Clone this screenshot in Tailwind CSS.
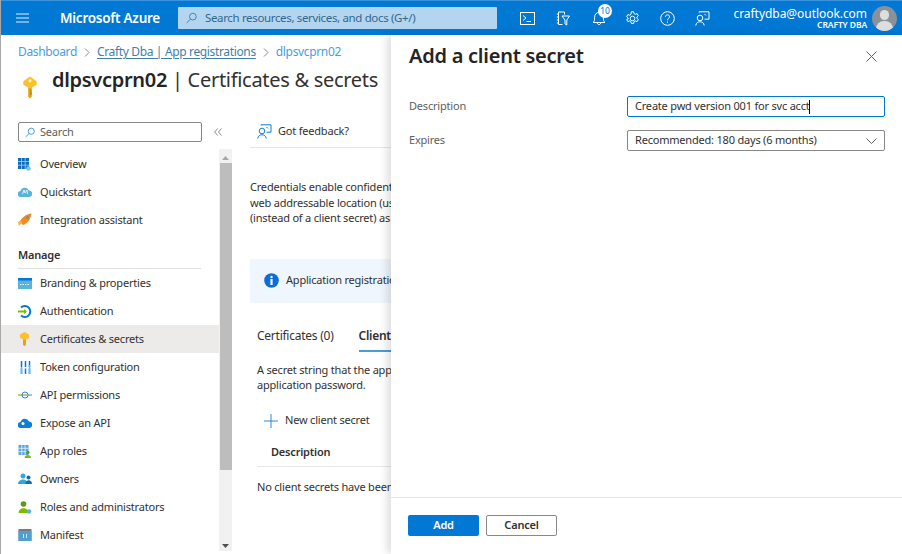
<!DOCTYPE html>
<html>
<head>
<meta charset="utf-8">
<script src="https://cdn.jsdelivr.net/npm/@tailwindcss/browser@4"></script>
</head>
<body class="m-0">
<div class="relative flex flex-col w-[902px] h-[554px] overflow-hidden bg-white text-[#323130] font-['Noto_Sans',sans-serif] text-[11px] tracking-[-0.2px] border-l border-[#a8a8a8]">
  <!-- top bar -->
  <header class="flex items-center h-[35px] shrink-0 bg-[#0078d4] border-t border-[#3a94dc] text-white -ml-px">
    <svg class="ml-[16px] w-[13px] h-[10px]" viewBox="0 0 13 10" fill="none" stroke="#e6f1fb" stroke-width="1"><path d="M0 1h13M0 5h13M0 9h13"/></svg>
    <span class="ml-[31px] w-[118px] text-[13.5px] font-semibold tracking-[-0.25px] whitespace-nowrap">Microsoft Azure</span>
    <div class="flex items-center w-[319px] h-[22px] rounded-[1px] bg-[#b3d5f0] text-[#30688f] text-[11.5px] tracking-[-0.35px]">
      <svg class="ml-[8px] mr-[8px] w-[11px] h-[12px]" viewBox="0 0 12 12" fill="none" stroke="#3f7fae" stroke-width="1"><circle cx="7.5" cy="4.5" r="3.7"/><path d="M5 7.2L.7 11.4"/></svg>
      Search resources, services, and docs (G+/)
    </div>
    <div class="flex items-center ml-[23px]">
      <svg class="w-[15px] h-[13px]" viewBox="0 0 15 13" fill="none" stroke="#fff" stroke-width="1"><rect x=".5" y=".5" width="14" height="12"/><path d="M3 3.500L6 6 3 8.500M6.500 9.500H11"/></svg>
      <svg class="ml-[21px] w-[14px] h-[15px]" viewBox="0 0 14 15" fill="none" stroke="#fff" stroke-width="1"><path d="M2.500 1h6v2.500M2.500 1v12.500h4M2.500 3H.8M2.500 6H.8M2.500 9H.8M2.500 12H.8M6 5h7.500L10.800 9v5l-1.800-1V9z"/></svg>
      <div class="relative ml-[22px] w-[14px] h-[16px]">
        <svg class="w-[14px] h-[16px]" viewBox="0 0 14 16" fill="none" stroke="#fff" stroke-width="1"><path d="M1 12.500c1.500-1 1.600-2.500 1.600-5C2.600 4 4.500 2.500 7 2.500s4.400 1.500 4.400 5c0 2.500.1 4 1.600 5zM5.300 12.800c0 2.400 3.400 2.400 3.400 0"/></svg>
        <span class="absolute -top-[6px] left-[6px] flex items-center justify-center w-[14px] h-[14px] rounded-full bg-white text-[#0078d4] text-[8.5px] leading-none">10</span>
      </div>
      <svg class="ml-[19px] w-[15px] h-[15px]" viewBox="0 0 15 15" fill="none" stroke="#fff" stroke-width="1"><circle cx="7.500" cy="7.500" r="2.300"/><path d="M6.300.8h2.400l.4 1.900 1.200.6 1.800-.7 1.200 2.100-1.400 1.300v1.200l1.400 1.300-1.200 2.100-1.800-.7-1.200.6-.4 1.900H6.300l-.4-1.900-1.200-.6-1.800.7-1.200-2.100L3.100 8.100V6.900L1.700 5.600l1.200-2.100 1.800.7 1.200-.6z"/></svg>
      <svg class="ml-[20px] w-[15px] h-[15px]" viewBox="0 0 15 15" fill="none" stroke="#fff" stroke-width="1"><circle cx="7.500" cy="7.500" r="6.800"/><path d="M5.500 5.800c0-2.700 4-2.700 4 0 0 1.700-2 1.600-2 3.500M7.500 10.500v1.200"/></svg>
      <svg class="ml-[20px] w-[15px] h-[15px]" viewBox="0 0 15 15" fill="none" stroke="#fff" stroke-width="1"><circle cx="5" cy="7" r="2.800"/><path d="M.8 14.500c.3-5 8-5 8.400 0M4 1.500V.8h10v7.400H9.500M9.500 3l1.500 1.500"/></svg>
    </div>
    <div class="ml-auto mr-[5px] flex flex-col items-end leading-none">
      <span class="mt-[1px] text-[12px] tracking-[-0.05px] whitespace-nowrap">craftydba@outlook.com</span>
      <span class="mt-[1px] text-[8.5px] font-semibold tracking-[-0.1px] whitespace-nowrap">CRAFTY DBA</span>
    </div>
    <div class="relative mr-[5px] w-[25px] h-[25px] rounded-full bg-[#8a9199] overflow-hidden">
      <span class="absolute left-[8px] top-[4px] w-[9px] h-[10px] rounded-full bg-[#dcdee0]"></span>
      <span class="absolute left-[4px] top-[15px] w-[17px] h-[12px] rounded-t-[8px] bg-[#dcdee0]"></span>
    </div>
  </header>

  <div class="flex flex-col grow min-h-0">
    <!-- breadcrumb -->
    <nav class="flex items-center gap-[7px] mt-[9px] ml-[17px] h-[16px] text-[12px] tracking-[-0.35px] whitespace-nowrap">
      <span class="text-[#4a9ddb]">Dashboard</span>
      <svg class="w-[6px] h-[9px]" viewBox="0 0 6 9" fill="none" stroke="#8a8886"><path d="M1 .5l4 4-4 4"/></svg>
      <span class="text-[#3f7fa8] underline underline-offset-2">Crafty Dba | App registrations</span>
      <svg class="w-[6px] h-[9px]" viewBox="0 0 6 9" fill="none" stroke="#8a8886"><path d="M1 .5l4 4-4 4"/></svg>
      <span class="text-[#4a9ddb]">dlpsvcprn02</span>
    </nav>
    <!-- title -->
    <div class="flex items-start ml-[21px] mt-[4px] h-[42px]">
      <svg class="mt-[11px] w-[16px] h-[25px]" viewBox="0 0 18 26"><path d="M7 10h4v13l-2 2.500L7 23z" fill="#e8a20c"/><path d="M9 14v8l2-1v-2l-1-1 1-1z" fill="#c98a05"/><path d="M9 .5l7.500 5.500v4L9 14 1.500 10V6z" fill="#fbc02d"/><circle cx="9" cy="5.500" r="1.800" fill="#fff3c4"/></svg>
      <h1 class="ml-[14px] text-[20px] leading-[32px] tracking-[-0.3px] whitespace-nowrap"><span class="font-semibold text-[#252423]">dlpsvcprn02</span> | Certificates &amp; secrets</h1>
    </div>

    <div class="flex grow min-h-0 mt-[16px]">
      <!-- sidebar -->
      <aside class="relative w-[231px] shrink-0 flex flex-col">
        <div class="flex items-center">
          <div class="flex items-center ml-[17px] w-[184px] h-[20px] border border-[#8a8886] rounded-[2px] text-[#605e5c] text-[11px]">
            <svg class="ml-[6px] mr-[5px] w-[10px] h-[11px]" viewBox="0 0 12 12" fill="none" stroke="#2b88d8" stroke-width="1"><circle cx="7.500" cy="4.500" r="3.700"/><path d="M5 7.200L.7 11.400"/></svg>
            Search
          </div>
          <svg class="ml-[12px] w-[8px] h-[8px]" viewBox="0 0 8 8" fill="none" stroke="#8a8886"><path d="M3.700.5L.7 4l3 3.500M7.500.5L4.500 4l3 3.500"/></svg>
        </div>
        <div class="flex grow min-h-0 mt-[8px]">
          <ul class="w-[218px] shrink-0 leading-[28px] whitespace-nowrap">
            <li class="flex items-center h-[28px] pl-[17px]"><svg class="w-[13px] h-[13px] mr-[9px]" viewBox="0 0 13 13"><rect width="11" height="11" fill="#0f6cbd"/><path d="M0 3.500h11M0 7.200h11M3.500 0v11M7.200 0v11" stroke="#9fd0f2" stroke-width=".8"/><circle cx="10.500" cy="10.500" r="2.300" fill="#7cc4ee"/></svg>Overview</li>
            <li class="flex items-center h-[28px] pl-[17px]"><svg class="w-[14px] h-[10px] mr-[8px]" viewBox="0 0 14 10"><path d="M3 10a3 3 0 0 1-.5-6A4.500 4.500 0 0 1 11 3.500 3.200 3.200 0 0 1 11 10z" fill="#59b4d9"/><path d="M4.500 7l1.500-4 1 3 2-3 .5 4" stroke="#fff" stroke-width=".8" fill="none"/></svg>Quickstart</li>
            <li class="flex items-center h-[28px] pl-[17px]"><svg class="w-[14px] h-[14px] mr-[8px]" viewBox="0 0 14 14"><path d="M2 9C3 5 8 1 13.500.5 13 6 9 11 5 12z" fill="#f28a1e"/><path d="M0 9l3-2 1 3-3 3z" fill="#fbb040"/><circle cx="9.500" cy="4.500" r="1.300" fill="#3aa0e0"/></svg>Integration assistant</li>
            <li class="mt-[7px] ml-[17px] mr-[18px] h-[28px] font-semibold border-b border-[#dfdfdf] leading-[27px]">Manage</li>
            <li class="flex items-center h-[28px] pl-[17px]"><svg class="w-[14px] h-[11px] mr-[8px]" viewBox="0 0 14 11"><rect width="14" height="11" fill="#59b4d9"/><rect width="14" height="2.500" fill="#0078d4"/><path d="M2 6.500h10" stroke="#fff" stroke-dasharray="1.500 1"/></svg>Branding &amp; properties</li>
            <li class="flex items-center h-[28px] pl-[17px]"><svg class="w-[14px] h-[13px] mr-[8px]" viewBox="0 0 14 13" fill="none"><path d="M3 2.500a5.500 5.500 0 1 1 0 8" stroke="#0078d4" stroke-width="2"/><path d="M0 6.500h8" stroke="#7fba00" stroke-width="2"/><path d="M6 4l3 2.500L6 9z" fill="#7fba00"/></svg>Authentication</li>
            <li class="flex items-center h-[28px] pl-[19px] bg-[#edebe9]"><svg class="w-[9px] h-[14px] mr-[11px]" viewBox="0 0 9 14"><path d="M3 6h3v7l-1.500 1L3 13z" fill="#e8a20c"/><path d="M4.500 0L9 2.500V6L4.500 8 0 6V2.500z" fill="#fbc02d"/></svg>Certificates &amp; secrets</li>
            <li class="flex items-center h-[28px] pl-[19px]"><svg class="w-[11px] h-[13px] mr-[9px]" viewBox="0 0 10 13"><path d="M1 0v13M5 0v13M9 0v13" stroke="#0078d4" stroke-width="1.500" stroke-dasharray="6 1.500"/><path d="M1 6v7M9 4v9" stroke="#50c4f0" stroke-width="1.500"/></svg>Token configuration</li>
            <li class="flex items-center h-[28px] pl-[17px]"><svg class="w-[14px] h-[8px] mr-[8px]" viewBox="0 0 14 8" fill="none"><path d="M0 4h9" stroke="#7fba00" stroke-width="1.200"/><circle cx="7" cy="4" r="3" stroke="#2b88d8"/><path d="M10 4h4" stroke="#2b88d8"/></svg>API permissions</li>
            <li class="flex items-center h-[28px] pl-[17px]"><svg class="w-[14px] h-[10px] mr-[8px]" viewBox="0 0 14 10"><path d="M3 10a3 3 0 0 1-.5-6A4.500 4.500 0 0 1 11 3.500 3.200 3.200 0 0 1 11 10z" fill="#0f7fd6"/><circle cx="5" cy="5.500" r="1.500" fill="#fff"/></svg>Expose an API</li>
            <li class="flex items-center h-[28px] pl-[17px]"><svg class="w-[14px] h-[13px] mr-[8px]" viewBox="0 0 13 13"><rect width="10" height="10" fill="#59a5dc"/><path d="M0 3.300h10M0 6.600h10M3.300 0v10M6.600 0v10" stroke="#fff" stroke-width=".7"/><path d="M6 13c0-4 6.500-4 6.500 0z" fill="#7fba00"/><circle cx="9.300" cy="7.500" r="1.800" fill="#5e9a10"/></svg>App roles</li>
            <li class="flex items-center h-[28px] pl-[17px]"><svg class="w-[14px] h-[12px] mr-[8px]" viewBox="0 0 14 12"><circle cx="5" cy="3" r="2.500" fill="#2fa8e0"/><path d="M0 11c0-6 10-6 10 0z" fill="#2fa8e0"/><circle cx="10.500" cy="4.500" r="2" fill="#0f6cbd"/><path d="M7.500 11c0-5 6.500-5 6.500 0z" fill="#0f6cbd"/></svg>Owners</li>
            <li class="flex items-center h-[28px] pl-[17px]"><svg class="w-[14px] h-[13px] mr-[8px]" viewBox="0 0 13 13"><circle cx="5" cy="3" r="2.800" fill="#5e9a10"/><path d="M0 12c0-6.500 10-6.500 10 0z" fill="#7fba00"/><circle cx="10.500" cy="10.500" r="2.300" fill="#59b4d9"/></svg>Roles and administrators</li>
            <li class="flex items-center h-[28px] pl-[17px]"><svg class="w-[14px] h-[12px] mr-[8px]" viewBox="0 0 13 12"><rect width="13" height="12" fill="#7a7a7a"/><rect y="2" width="13" height="10" fill="#4f9fd4"/><path d="M5 5v4M8 5v4" stroke="#cfe8f7"/></svg>Manifest</li>
          </ul>
          <!-- scrollbar -->
          <div class="flex flex-col items-center w-[13px] h-[402px] bg-[#f1f1f1] -mt-[1px]">
            <svg class="mt-[7px] w-[7px] h-[4px]" viewBox="0 0 7 4"><path d="M3.500 0L7 4H0z" fill="#a6a6a6"/></svg>
            <div class="mt-[3px] w-[12px] h-[307px] bg-[#bdbdbd]"></div>
            <svg class="mt-auto mb-[3px] w-[7px] h-[4px]" viewBox="0 0 7 4"><path d="M3.500 4L7 0H0z" fill="#505050"/></svg>
          </div>
        </div>
      </aside>

      <!-- main content -->
      <main class="grow min-w-0 pl-[18px] overflow-hidden -mt-[6px]">
        <div class="flex items-center h-[32px] border-b border-[#e5e5e5]">
          <svg class="ml-[7px] w-[15px] h-[15px] mr-[6px]" viewBox="0 0 15 15" fill="none" stroke="#0f7fd6" stroke-width="1"><circle cx="5" cy="7" r="2.800"/><path d="M.8 14.500c.3-5 8-5 8.400 0M4 1.500V.8h10v7.400H9.500M9.500 3l1.500 1.500"/></svg>
          <span>Got feedback?</span>
        </div>
        <p class="mt-[31px] w-[400px] leading-[15.5px] whitespace-nowrap">Credentials enable confidential applications to identify themselves to the<br>web addressable location (using an HTTPS scheme). For a higher level of<br>(instead of a client secret) as a credential.</p>
        <div class="flex items-center mt-[33px] h-[44px] w-[500px] bg-[#f0f6fd] pl-[14px] whitespace-nowrap">
          <svg class="w-[15px] h-[15px] mr-[7px]" viewBox="0 0 15 15"><circle cx="7.500" cy="7.500" r="7.300" fill="#0f6cd6"/><circle cx="7.500" cy="4" r="1.200" fill="#fff"/><rect x="6.400" y="6" width="2.200" height="6" fill="#fff"/></svg>
          Application registration secrets expire
        </div>
        <div class="ml-[7px]">
          <div class="flex mt-[25px] h-[24px] text-[12px] leading-[16px] tracking-[-0.25px] whitespace-nowrap">
            <span>Certificates (0)</span>
            <span class="ml-[25px] h-[24px] w-[140px] font-semibold border-b-2 border-[#4a9ddb]">Client secrets (0)</span>
          </div>
          <p class="mt-[10px] leading-[15px] whitespace-nowrap">A secret string that the application uses to prove its identity<br>application password.</p>
          <div class="flex items-center mt-[18px] h-[22px] pl-[7px] whitespace-nowrap">
            <svg class="w-[14px] h-[14px] mr-[7px]" viewBox="0 0 14 14" stroke="#2b88d8" stroke-width="1"><path d="M7 0v14M0 7h14"/></svg>
            New client secret
          </div>
          <div class="mt-[12px] h-[23px] w-[400px] pl-[14px] font-semibold border-b border-[#e8e8e8] leading-[15px]">Description</div>
          <p class="mt-[12px] whitespace-nowrap">No client secrets have been created for this application.</p>
        </div>
      </main>
    </div>
  </div>

  <!-- flyout panel -->
  <section class="absolute top-[35px] right-0 bottom-0 w-[511px] flex flex-col bg-white shadow-[-4px_0_8px_rgba(0,0,0,0.13)]">
    <div class="flex items-start justify-between pl-[18px] pr-[25px] pt-[6px]">
      <h2 class="text-[20px] leading-[30px] font-semibold tracking-[-0.25px] text-[#252423]">Add a client secret</h2>
      <svg class="mt-[10px] w-[11px] h-[11px]" viewBox="0 0 11 11" stroke="#605e5c" stroke-width="1"><path d="M.5.500l10 10M10.500.500l-10 10"/></svg>
    </div>
    <div class="flex items-center mt-[25px] pl-[18px] pr-[17px]">
      <label class="w-[218px] text-[#605e5c]">Description</label>
      <div class="flex items-center w-[258px] h-[21px] border-[1.500px] border-[#0078d4] rounded-[2px] pl-[7px] text-[#323130] whitespace-nowrap">Create pwd version 001 for svc acct<span class="w-px h-[14px] bg-black -ml-[1px]"></span></div>
    </div>
    <div class="flex items-center mt-[13px] pl-[18px] pr-[17px]">
      <label class="w-[218px] text-[#605e5c]">Expires</label>
      <div class="flex items-center justify-between w-[258px] h-[21px] border border-[#8a8886] rounded-[2px] pl-[7px] pr-[7px] whitespace-nowrap">Recommended: 180 days (6 months)
        <svg class="w-[11px] h-[6px]" viewBox="0 0 11 6" fill="none" stroke="#605e5c"><path d="M.5.500l5 5 5-5"/></svg>
      </div>
    </div>
    <div class="mt-auto flex items-center gap-[7px] h-[57px] pl-[17px] pb-[1px] border-t border-[#e5e5e5]">
      <button class="w-[71px] h-[21px] rounded-[2px] bg-[#0078d4] text-white font-semibold">Add</button>
      <button class="w-[71px] h-[21px] rounded-[2px] border border-[#8a8886] text-[#323130] font-semibold">Cancel</button>
    </div>
  </section>
</div>
</body>
</html>
